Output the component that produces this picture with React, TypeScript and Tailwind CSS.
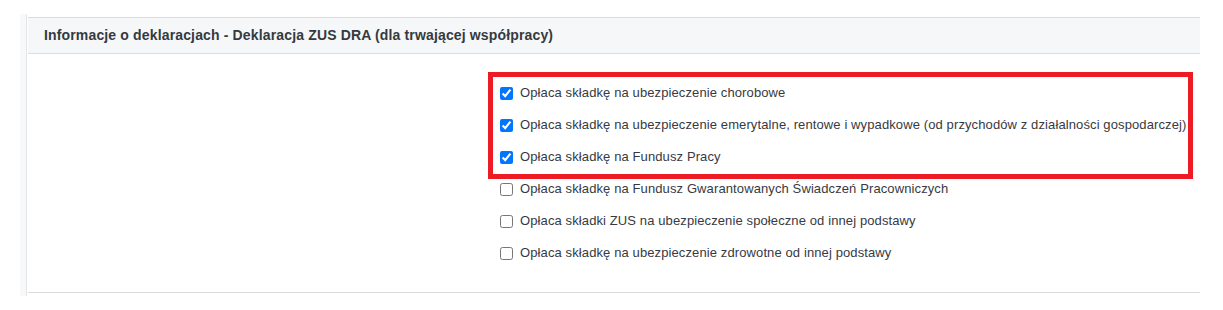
import React from 'react';

const rows = [
  { label: 'Opłaca składkę na ubezpieczenie chorobowe', checked: true },
  { label: 'Opłaca składkę na ubezpieczenie emerytalne, rentowe i wypadkowe (od przychodów z działalności gospodarczej)', checked: true },
  { label: 'Opłaca składkę na Fundusz Pracy', checked: true },
  { label: 'Opłaca składkę na Fundusz Gwarantowanych Świadczeń Pracowniczych', checked: false },
  { label: 'Opłaca składki ZUS na ubezpieczenie społeczne od innej podstawy', checked: false },
  { label: 'Opłaca składkę na ubezpieczenie zdrowotne od innej podstawy', checked: false },
];

export default function App() {
  return (
    <div className="w-[1223px] h-[310px] bg-white pt-[14px] pl-[20px] font-['Liberation_Sans',Arial,sans-serif]">
      <div className="flex h-[282px]">
        {/* side strip */}
        <div className="w-[7px] bg-[#f7f8fa] border-r border-[#e4e5e7]" />

        {/* card */}
        <div className="mt-[3px] ml-[1px] w-[1172px] h-[276px] border-t border-b border-[#dadbdd] flex flex-col">
          <div className="h-[36px] bg-[#f6f7f9] border-b border-[#dcdde0] flex items-center pl-[16px]">
            <h3 className="text-[14px] font-bold text-[#343a40] tracking-[0.15px]">
              Informacje o deklaracjach - Deklaracja ZUS DRA (dla trwającej współpracy)
            </h3>
          </div>

          <div className="relative flex-1 pt-[23px]">
            <div className="flex">
              <div className="w-[472px] shrink-0" />
              <div className="flex flex-col">
                {rows.map((r) => (
                  <label key={r.label} className="h-[32px] flex items-center gap-[7px] text-[13px] text-[#373a3f] tracking-[0.11px]">
                    <input type="checkbox" defaultChecked={r.checked} className="w-[13px] h-[13px] m-0" />
                    <span>{r.label}</span>
                  </label>
                ))}
              </div>
            </div>

            {/* annotation box */}
            <div className="absolute left-[460px] top-[18px] w-[705px] h-[107px] border-[5px] border-[#ed1c24] pointer-events-none" />
          </div>
        </div>
      </div>
    </div>
  );
}
